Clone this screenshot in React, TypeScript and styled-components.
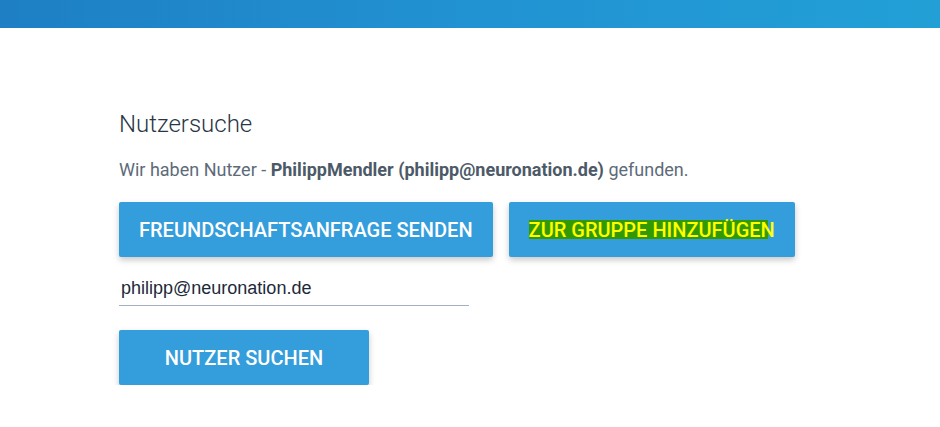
import React, { useState } from "react";
import styled, { createGlobalStyle } from "styled-components";

const GlobalStyle = createGlobalStyle`
  body {
    margin: 0;
    background: #fff;
    font-family: Roboto, "Noto Sans", sans-serif;
  }
`;

const TopBar = styled.div`
  height: 28px;
  background: linear-gradient(90deg, #1e7fc4 0%, #2192d2 50%, #22a0d6 100%);
`;

const Content = styled.div`
  padding: 82px 0 0 119px;
`;

const Title = styled.h2`
  margin: 0;
  font-size: 24px;
  font-weight: 300;
  line-height: 28px;
  color: #2a3645;
`;

const Info = styled.p`
  margin: 20px 0 0;
  font-size: 18px;
  line-height: 24px;
  color: #5d6b79;

  b {
    font-weight: 700;
    color: #4c5a68;
  }
`;

const ButtonRow = styled.div`
  display: flex;
  gap: 16px;
  margin-top: 20px;
`;

const ActionButton = styled.button<{ $width?: number }>`
  height: 55px;
  ${(p) => (p.$width ? `width: ${p.$width}px;` : "padding: 0 20px;")}
  border: none;
  border-radius: 2px;
  background: #349ddb;
  color: #fff;
  font-family: Roboto, sans-serif;
  font-size: 20px;
  font-weight: 500;
  text-transform: uppercase;
  box-shadow: 0 3px 6px rgba(0, 0, 0, 0.22);
  cursor: pointer;
`;

const Marked = styled.span`
  color: #ffff00;
  background: linear-gradient(#339900, #339900) no-repeat 0 55%;
  background-size: calc(100% - 7px) 19px;
`;

const SearchInput = styled.input`
  display: block;
  width: 350px;
  margin-top: 17px;
  padding: 4px 2px 6px;
  box-sizing: border-box;
  border: none;
  border-bottom: 1px solid #a3b1c0;
  outline: none;
  background: transparent;
  font-family: "Liberation Sans", Arial, sans-serif;
  font-size: 18px;
  color: #1d2a3a;
`;

const SearchRow = styled.div`
  margin-top: 24px;
`;

const App = () => {
  const [email, setEmail] = useState("philipp@neuronation.de");

  return (
    <>
      <GlobalStyle />
      <TopBar />
      <Content>
        <Title>Nutzersuche</Title>
        <Info>
          Wir haben Nutzer - <b>PhilippMendler (philipp@neuronation.de)</b> gefunden.
        </Info>
        <ButtonRow>
          <ActionButton>Freundschaftsanfrage senden</ActionButton>
          <ActionButton>
            <Marked>Zur Gruppe hinzufügen</Marked>
          </ActionButton>
        </ButtonRow>
        <SearchInput value={email} onChange={(e) => setEmail(e.target.value)} />
        <SearchRow>
          <ActionButton $width={250}>Nutzer suchen</ActionButton>
        </SearchRow>
      </Content>
    </>
  );
};

export default App;
